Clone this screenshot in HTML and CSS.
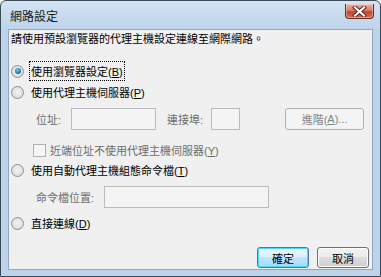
FILE: index.html
```html
<!DOCTYPE html>
<html lang="zh-Hant">

<head>
    <meta charset="UTF-8">
    <title>網路設定</title>
    <link rel="stylesheet" href="styles.css">
</head>

<body>
    <div class="window">
        <div class="titlebar">
            <span class="title">網路設定</span>
            <span class="close">
                <svg width="15" height="11" viewBox="0 0 15 11">
                    <path d="M3 1.5 L12 9.5 M12 1.5 L3 9.5" stroke="#5a2018" stroke-width="4" stroke-linecap="square"/>
                    <path d="M3 1.5 L12 9.5 M12 1.5 L3 9.5" stroke="#ffffff" stroke-width="2.2" stroke-linecap="square"/>
                </svg>
            </span>
        </div>

        <div class="client">
            <p class="intro">請使用預設瀏覽器的代理主機設定連線至網際網路。</p>

            <!-- Proxy options -->
            <div class="option first">
                <span class="radio checked"></span>
                <span class="label focus">使用瀏覽器設定(<u>B</u>)</span>
            </div>

            <div class="option">
                <span class="radio"></span>
                <span class="label">使用代理主機伺服器(<u>P</u>)</span>
            </div>

            <div class="field-row address">
                <span class="field-label">位址:</span>
                <span class="textbox addr-box"></span>
                <span class="field-label port-label">連接埠:</span>
                <span class="textbox port-box"></span>
                <span class="button disabled advanced">進階(<u>A</u>)...</span>
            </div>

            <div class="check-row">
                <span class="checkbox"></span>
                <span class="field-label">近端位址不使用代理主機伺服器(<u>Y</u>)</span>
            </div>

            <div class="option">
                <span class="radio"></span>
                <span class="label">使用自動代理主機組態命令檔(<u>T</u>)</span>
            </div>

            <div class="field-row script">
                <span class="field-label">命令檔位置:</span>
                <span class="textbox script-box"></span>
            </div>

            <div class="option last">
                <span class="radio"></span>
                <span class="label">直接連線(<u>D</u>)</span>
            </div>

            <div class="footer">
                <span class="button default">確定</span>
                <span class="button">取消</span>
            </div>
        </div>
    </div>
</body>

</html>
```

FILE: styles.css
```css
body {
    margin: 0;
    padding: 0;
    font-family: "Liberation Sans", "Noto Sans CJK TC", sans-serif;
    font-size: 11px;
    color: #1e1e1e;
    background-color: #ffffff;
}

.window {
    width: 381px;
    height: 277px;
    box-sizing: border-box;
    border: 1px solid #3c4a58;
    border-radius: 6px 6px 0 0;
    background: linear-gradient(#d3e3f3, #bcd3ea 30px, #bcd3ea);
    display: flex;
    flex-direction: column;
    padding: 0 7px 6px 7px;
}

.titlebar {
    height: 28px;
    display: flex;
    align-items: flex-start;
    justify-content: space-between;
}

.title {
    margin-top: 6px;
    margin-left: 2px;
    font-size: 12px;
    color: #1a1a1a;
}

.close {
    margin-top: 3px;
    margin-right: -1px;
    width: 27px;
    height: 14px;
    border: 1px solid #6b2d22;
    border-top: none;
    border-radius: 0 0 4px 4px;
    background: linear-gradient(#eab1a3, #d97e6b 45%, #c4462e 55%, #d0705a);
    display: flex;
    align-items: center;
    justify-content: center;
    box-shadow: inset 0 0 0 1px rgba(255, 255, 255, 0.35);
}

.client {
    flex: 1;
    background-color: #f0f0f0;
    border: 1px solid #8fa7bf;
    padding: 0 0 0 2px;
    display: flex;
    flex-direction: column;
}

.intro {
    margin: 2px 0 0 0;
    height: 14px;
    line-height: 14px;
    color: #000000;
}

.option {
    display: flex;
    align-items: center;
    height: 18px;
    margin-top: 3px;
}

.option.first {
    margin-top: 16px;
}

.option.last {
    margin-top: 6px;
}

.radio {
    width: 11px;
    height: 11px;
    border: 1px solid #8c8f92;
    border-radius: 50%;
    background: radial-gradient(circle at 50% 45%, #f2f2f2, #d4d6d8);
    position: relative;
    flex: none;
}

.radio.checked::after {
    content: "";
    position: absolute;
    left: 2.5px;
    top: 2.5px;
    width: 6px;
    height: 6px;
    border-radius: 50%;
    background: radial-gradient(circle at 40% 35%, #7ac5f0, #1c6aa8 70%, #154f80);
}

.label {
    margin-left: 5px;
    padding: 1px 1px;
    color: #000000;
    border: 1px solid transparent;
}

.label.focus {
    border: 1px dotted #000000;
}

.field-row {
    display: flex;
    align-items: center;
    height: 22px;
    margin-top: 7px;
}

.field-label {
    color: #6d6d6d;
}

.field-row .field-label:first-child {
    margin-left: 25px;
}

.textbox {
    height: 20px;
    border: 1px solid #b9bcbf;
    background-color: #f4f4f4;
    flex: none;
}

.addr-box {
    width: 83px;
    margin-left: 10px;
}

.port-label {
    margin-left: 11px;
}

.port-box {
    width: 27px;
    margin-left: 8px;
}

.script-box {
    width: 163px;
    margin-left: 10px;
}

.button {
    box-sizing: border-box;
    height: 21px;
    width: 52px;
    border: 1px solid #707070;
    border-radius: 3px;
    background: linear-gradient(#f2f2f2, #ebebeb 50%, #dddddd 50%, #cfcfcf);
    box-shadow: inset 0 0 0 1px #fcfcfc;
    display: flex;
    align-items: center;
    justify-content: center;
    color: #000000;
}

.button.disabled {
    border-color: #adb2b5;
    background: #f4f4f4;
    box-shadow: none;
    color: #838383;
}

.advanced {
    width: 79px;
    height: 22px;
    margin-left: 45px;
}

.button.default {
    border-color: #3c7fb1;
    box-shadow: inset 0 0 0 1px #48d8fb;
    background: linear-gradient(#eaf6fd, #d9f0fc 50%, #bee6fd 50%, #a7d9f5);
}

.check-row {
    display: flex;
    align-items: center;
    height: 16px;
    margin-top: 12px;
    margin-left: 22px;
}

.checkbox {
    width: 11px;
    height: 11px;
    border: 1px solid #b1b1b1;
    background-color: #f6f6f6;
    margin-right: 4px;
    flex: none;
}

.footer {
    margin-top: auto;
    margin-bottom: 1px;
    display: flex;
    justify-content: flex-end;
    gap: 8px;
    padding-right: 3px;
}
```
